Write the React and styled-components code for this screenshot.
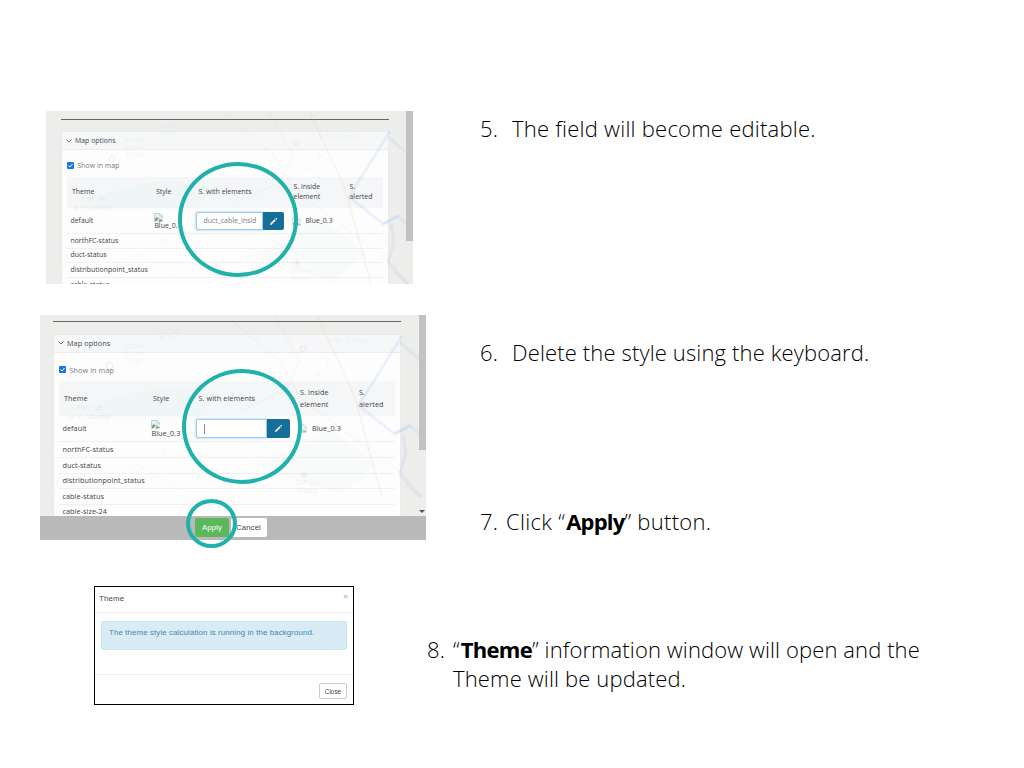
import React from "react";
import styled, { createGlobalStyle, css } from "styled-components";

const Global = createGlobalStyle`
  * { box-sizing: border-box; }
  body { margin: 0; background: #fff; }
`;

const Slide = styled.main`
  width: 1024px;
  height: 768px;
  padding-top: 111px;
  overflow: hidden;
  background: #fff;
  display: flex;
  flex-direction: column;
`;

const Step = styled.section`
  display: flex;
  align-items: flex-start;
  height: ${(p) => p.$height}px;
  padding-left: ${(p) => p.$indent}px;
  flex: none;
`;

const StepText = styled.div`
  display: flex;
  margin-left: ${(p) => p.$left}px;
  margin-top: ${(p) => p.$top}px;
  font: 300 22px/29px "Open Sans", "Noto Sans", sans-serif;
  color: #000;
  white-space: nowrap;
  b { font-weight: 700; color: #000; margin-left: 1px; letter-spacing: ${(p) => p.$bold || 0}px; }
`;

const StepNumber = styled.span`
  flex: none;
  width: ${(p) => p.$width}px;
  letter-spacing: 0.3px;
`;

const Line = styled.div`
  letter-spacing: ${(p) => p.$spacing}px;
`;

const Shot = styled.div`
  position: relative;
  flex: none;
  width: ${(p) => p.$d.width}px;
  height: ${(p) => p.$d.height}px;
  background: #ededec;
  font: 400 ${(p) => p.$d.font}px "Open Sans", "Noto Sans", sans-serif;
  letter-spacing: ${(p) => p.$d.spacing}px;
  color: #3f4244;
`;

const Viewport = styled.div`
  height: ${(p) => p.$d.view}px;
  overflow: hidden;
  padding-top: ${(p) => p.$d.ruleTop}px;
  padding-left: ${(p) => p.$d.left}px;
`;

const Rule = styled.div`
  width: ${(p) => p.$d.panel}px;
  height: 1px;
  background: #696666;
  margin-bottom: ${(p) => p.$d.ruleGap}px;
`;

const Panel = styled.div`
  width: ${(p) => p.$d.panel}px;
  height: 260px;
  background: #fdfdfd;
  border: 1px solid #e9eaea;
`;

const PanelTitle = styled.div`
  height: ${(p) => p.$d.title}px;
  display: flex;
  align-items: center;
  gap: 3px;
  padding-left: 4px;
  background: #f6f7f8;
  border-bottom: 1px solid #ebecec;
  color: #46494b;
`;

const CheckRow = styled.div`
  height: ${(p) => p.$d.check}px;
  display: flex;
  align-items: center;
  gap: 4px;
  padding: ${(p) => p.$d.checkPad}px 0 0 4.5px;
  color: #777b7e;
`;

const Table = styled.div`
  margin: 0 5px;
`;

const Row = styled.div`
  display: grid;
  grid-template-columns: ${(p) => p.$d.columns};
  align-items: center;
  height: ${(p) => p.$h}px;
  padding-left: 3.4px;
  padding-top: ${(p) => p.$drop || 0}px;
  line-height: 1;
  border-bottom: 1px solid #eff0f0;
  white-space: nowrap;
  ${(p) => p.$head && css`
    background: #f4f6f7;
    border-bottom: 0;
    padding-left: 5px;
    line-height: ${p.$d.headLine}px;
  `}
`;

const StyleCell = styled.div`
  display: flex;
  flex-direction: column;
  align-items: flex-start;
  padding-top: 1px;
  line-height: ${(p) => p.$d.font + 1}px;
`;

const InsideCell = styled.div`
  display: flex;
  align-items: center;
  gap: 4.5px;
`;

const InputGroup = styled.div`
  display: flex;
  width: ${(p) => p.$d.group}px;
  height: ${(p) => p.$d.inputH}px;
  margin-left: ${(p) => p.$d.groupShift}px;
`;

const Field = styled.div`
  flex: 1;
  display: flex;
  align-items: center;
  overflow: hidden;
  padding-left: 6px;
  border: 1px solid #9cc9ee;
  border-radius: 2px 0 0 2px;
  background: #fff;
  box-shadow: 0 0 2px 1px #cfe4f6;
  color: #777a7d;
`;

const Caret = styled.i`
  width: 1px;
  height: 10px;
  margin-left: 1px;
  background: #888;
`;

const EditButton = styled.div`
  width: ${(p) => p.$d.edit}px;
  display: flex;
  align-items: center;
  justify-content: center;
  border-radius: 0 2px 2px 0;
  background: #166e9b;
`;

const Thumb = styled.div`
  position: absolute;
  top: 0;
  right: 0;
  width: ${(p) => p.$d.thumbW}px;
  height: ${(p) => p.$d.thumb}px;
  background: #c2c2c2;
`;

const Backdrop = styled.svg`
  position: absolute;
  inset: 0 auto auto 0;
  width: 100%;
  height: ${(p) => p.$d.map}px;
  pointer-events: none;
`;

const Ring = styled.div`
  position: absolute;
  left: ${(p) => p.$x}px;
  top: ${(p) => p.$y}px;
  width: ${(p) => p.$w}px;
  height: ${(p) => p.$h}px;
  border: 4px solid #20b2aa;
  border-radius: 50%;
`;

const ScrollArrow = styled.svg`
  position: absolute;
  right: 1px;
  top: 194.5px;
  width: 6px;
  height: 4px;
`;

const ActionBar = styled.div`
  display: flex;
  align-items: center;
  gap: 2px;
  height: 24.5px;
  padding-left: 155px;
  background: #b9b9b9;
`;

const ActionButton = styled.div`
  display: flex;
  align-items: center;
  justify-content: center;
  width: ${(p) => (p.$primary ? 34 : 36)}px;
  height: 19px;
  border-radius: 2px;
  background: ${(p) => (p.$primary ? "#5cb85c" : "#fff")};
  color: ${(p) => (p.$primary ? "#fff" : "#444")};
  font: 7.8px "Liberation Sans", sans-serif;
  ${(p) => !p.$primary && css`padding-right: 1px;`}
`;

const Dialog = styled.div`
  flex: none;
  width: 260px;
  height: 119px;
  border: 1px solid #000;
  background: #fff;
  font: 7.9px "Liberation Sans", sans-serif;
  display: flex;
  flex-direction: column;
`;

const DialogHead = styled.div`
  display: flex;
  justify-content: space-between;
  height: 26px;
  padding: 7px 5px 0 4px;
  border-bottom: 1px solid #ececec;
  color: #4a4a4a;
  letter-spacing: 0.15px;
`;

const CloseMark = styled.span`
  margin-top: -2px;
  color: #bbb;
  font-weight: 700;
`;

const Notice = styled.div`
  margin: 8px 6px 0 6px;
  height: 29px;
  padding: 7px 7px;
  border: 1px solid #c9e6f0;
  border-radius: 2px;
  background: #d9ecf6;
  color: #4588aa;
  line-height: 8px;
  letter-spacing: 0.11px;
`;

const DialogFoot = styled.div`
  display: flex;
  justify-content: flex-end;
  margin-top: auto;
  height: 30px;
  padding: 8px 6px 0 0;
  border-top: 1px solid #ececec;
`;

const CloseButton = styled.div`
  display: flex;
  align-items: center;
  justify-content: center;
  width: 28px;
  height: 16px;
  border: 1px solid #ccc;
  border-radius: 2px;
  font-size: 6.4px;
  color: #444;
`;

const first = {
  width: 367, height: 173, view: 173, map: 173, font: 6.9, spacing: 0.03,
  ruleTop: 8, left: 15, ruleGap: 11, panel: 328, title: 18, check: 26.5, checkPad: 4,
  columns: "84px 42.5px 95px 56px 1fr", headLine: 10.5, head: 31, main: 26.5, drop: 1.5, rows: [15.2, 14.2, 15, 15],
  group: 88, groupShift: -0.5, edit: 21.5, inputH: 18, thumb: 130, thumbW: 7,
};

const second = {
  width: 386, height: 225, view: 200.5, map: 182, font: 7.25, spacing: 0.08,
  ruleTop: 6, left: 13, ruleGap: 11.5, panel: 348, title: 18, check: 28.5, checkPad: 6,
  columns: "89px 45.5px 101.5px 59px 1fr", headLine: 11.2, head: 35, main: 26.2, drop: 0, rows: [15.7, 15.9, 15.3, 15.7, 15.7],
  group: 93.5, groupShift: -0.8, edit: 23, inputH: 19, thumb: 135, thumbW: 7.5,
};

const names = ["northFC-status", "duct-status", "distributionpoint_status", "cable-status", "cable-size-24"];

const Pencil = () => (
  <svg width="9" height="9" viewBox="0 0 16 16" fill="#fff">
    <path d="M1.5 14.5 2.6 11.3 9.9 4l2.1 2.1-7.3 7.3zM10.9 3l1.1-1.1q.6-.5 1.2 0l.9.9q.5.6 0 1.2L13 5.1z" />
  </svg>
);

const BrokenImage = ({ faded }) => (
  <svg width="9" height="9" viewBox="0 0 18 18" opacity={faded ? 0.7 : 1}>
    <path d="M1 1h11l5 5v3l-4 3-3-2-4 5-2 2H1z" fill="#e6effb" stroke="#a3a9ae" />
    <path d="M12 1v5h5" fill="#fff" stroke="#a3a9ae" />
    <path d="M2 13q3-7 6-3l1 1-5 5H2z" fill="#5aa75a" />
    <path d="m8 16 4-4 3 2 2-2v5H8z" fill="#70ad6e" />
  </svg>
);

const Check = () => (
  <svg width="7" height="7" viewBox="0 0 14 14">
    <rect width="14" height="14" rx="2" fill="#1679e8" />
    <path d="m3 7 3 3 5-6" fill="none" stroke="#fff" strokeWidth="2" />
  </svg>
);

const Chevron = () => (
  <svg width="6" height="4" viewBox="0 0 12 8">
    <path d="m1 1 5 5 5-5" fill="none" stroke="#555" strokeWidth="1.6" />
  </svg>
);

const MapTint = ({ d }) => (
  <Backdrop $d={d} viewBox="0 0 367 173" preserveAspectRatio="none" fill="none" overflow="hidden">
    <path d="m344 20-41 66 34 27 15-8 15 14M345 113l3 18-6 20 14 17 11 9" stroke="#9db9f2" strokeOpacity=".17" strokeWidth="3" />
    <path d="m342 26 25 21M337 113l15-8" stroke="#9bd0ef" strokeOpacity=".2" strokeWidth="3" />
    <path d="m263 0 36 77 26 96" stroke="#ffb28c" strokeOpacity=".16" strokeWidth="1.5" />
    <path d="m182 5 45 38 21 36 98 73 25 32M222 0l25 43-12 28-44 20" stroke="#8e8e8e" strokeOpacity=".07" />
    <path d="m0 125 20 20-8 32M58 162l34-20 42 25M195 150l23-25 44 23" stroke="#999" strokeOpacity=".05" />
    <path d="M55 84q80-27 110-4l-18 19H44z" fill="#a0dcc7" fillOpacity=".04" />
    <path d="m205 145 70-38 46 35-36 28z" fill="#a5dfc8" fillOpacity=".05" />
    <g fontFamily="Liberation Sans" fontSize="6" fill="#6f9ce8" fillOpacity=".1">
      <text x="78" y="31">Hospital</text><text x="79" y="38">Moisès</text><text x="80" y="45">Broggi</text>
      <text x="112" y="17">de l'Esp</text><text x="112" y="24">de Sant</text>
      <text x="272" y="48" fontSize="8">P</text><text x="262" y="60" fontSize="8">P</text><text x="115" y="133" fontSize="8">P</text>
      <text x="272" y="27">Àngel Guimerà</text>
    </g>
    <g fontFamily="Liberation Sans" fontSize="7" fontStyle="italic" fill="#8db99a" fillOpacity=".18">
      <text x="35" y="90">Parc de</text><text x="27" y="99">la Fontsanta</text>
    </g>
    <g fontFamily="Liberation Sans" fontSize="6" fill="#e58181" fillOpacity=".14">
      <text x="242" y="162">CAP Les</text><text x="245" y="169">Planes</text>
    </g>
    <g stroke="#e58181" strokeOpacity=".16"><circle cx="66" cy="48" r="3" /><circle cx="250" cy="32" r="2.5" /><path d="M251 149v6m-3-3h6" /></g>
  </Backdrop>
);

const MapOptions = ({ d, value, count }) => (
  <Viewport $d={d}>
    <Rule $d={d} />
    <Panel $d={d}>
      <PanelTitle $d={d}><Chevron />Map options</PanelTitle>
      <CheckRow $d={d}><Check />Show in map</CheckRow>
      <Table>
        <Row $d={d} $h={d.head} $head>
          <span>Theme</span><span>Style</span><span>S. with elements</span>
          <span>S. inside<br />element</span><span>S.<br />alerted</span>
        </Row>
        <Row $d={d} $h={d.main} $drop={d.drop}>
          <span>default</span>
          <StyleCell $d={d}><BrokenImage />Blue_0.3</StyleCell>
          <InputGroup $d={d}>
            <Field>{value || <Caret />}</Field>
            <EditButton $d={d}><Pencil /></EditButton>
          </InputGroup>
          <InsideCell><BrokenImage faded />Blue_0.3</InsideCell>
        </Row>
        {names.slice(0, count).map((name, i) => (
          <Row key={name} $d={d} $h={d.rows[i]}><span>{name}</span></Row>
        ))}
      </Table>
    </Panel>
  </Viewport>
);

export default function App() {
  return (
    <>
      <Global />
      <Slide>
        <Step $height={204} $indent={46}>
          <Shot $d={first}>
            <MapOptions d={first} value="duct_cable_insid" count={4} />
            <MapTint d={first} />
            <Thumb $d={first} />
            <Ring $x={131.5} $y={51} $w={120.5} $h={115} />
          </Shot>
          <StepText $left={67} $top={3}>
            <StepNumber $width={32}>5.</StepNumber>
            <Line $spacing={0.23}>The field will become editable.</Line>
          </StepText>
        </Step>
        <Step $height={271} $indent={40}>
          <Shot $d={second}>
            <MapOptions d={second} count={5} />
            <ActionBar>
              <ActionButton $primary>Apply</ActionButton>
              <ActionButton>Cancel</ActionButton>
            </ActionBar>
            <MapTint d={second} />
            <Thumb $d={second} />
            <ScrollArrow viewBox="0 0 6 4"><path d="M0 0h6L3 3z" fill="#555" /></ScrollArrow>
            <Ring $x={142} $y={54} $w={120} $h={115} />
            <Ring $x={146} $y={184} $w={51} $h={49} />
          </Shot>
          <div>
            <StepText $left={54} $top={23}>
              <StepNumber $width={32}>6.</StepNumber>
              <Line $spacing={0.14}>Delete the style using the keyboard.</Line>
            </StepText>
            <StepText $left={54} $top={140} $bold={-0.8}>
              <StepNumber $width={26}>7.</StepNumber>
              <Line $spacing={0.3}>Click “<b>Apply</b>” button.</Line>
            </StepText>
          </div>
        </Step>
        <Step $height={120} $indent={94}>
          <Dialog>
            <DialogHead>Theme<CloseMark>×</CloseMark></DialogHead>
            <Notice>The theme style calculation is running in the background.</Notice>
            <DialogFoot><CloseButton>Close</CloseButton></DialogFoot>
          </Dialog>
          <StepText $left={73} $top={49} $bold={-0.7}>
            <StepNumber $width={26}>8.</StepNumber>
            <div>
              <Line $spacing={0.1}>“<b>Theme</b>” information window will open and the</Line>
              <Line $spacing={0.15}>Theme will be updated.</Line>
            </div>
          </StepText>
        </Step>
      </Slide>
    </>
  );
}
